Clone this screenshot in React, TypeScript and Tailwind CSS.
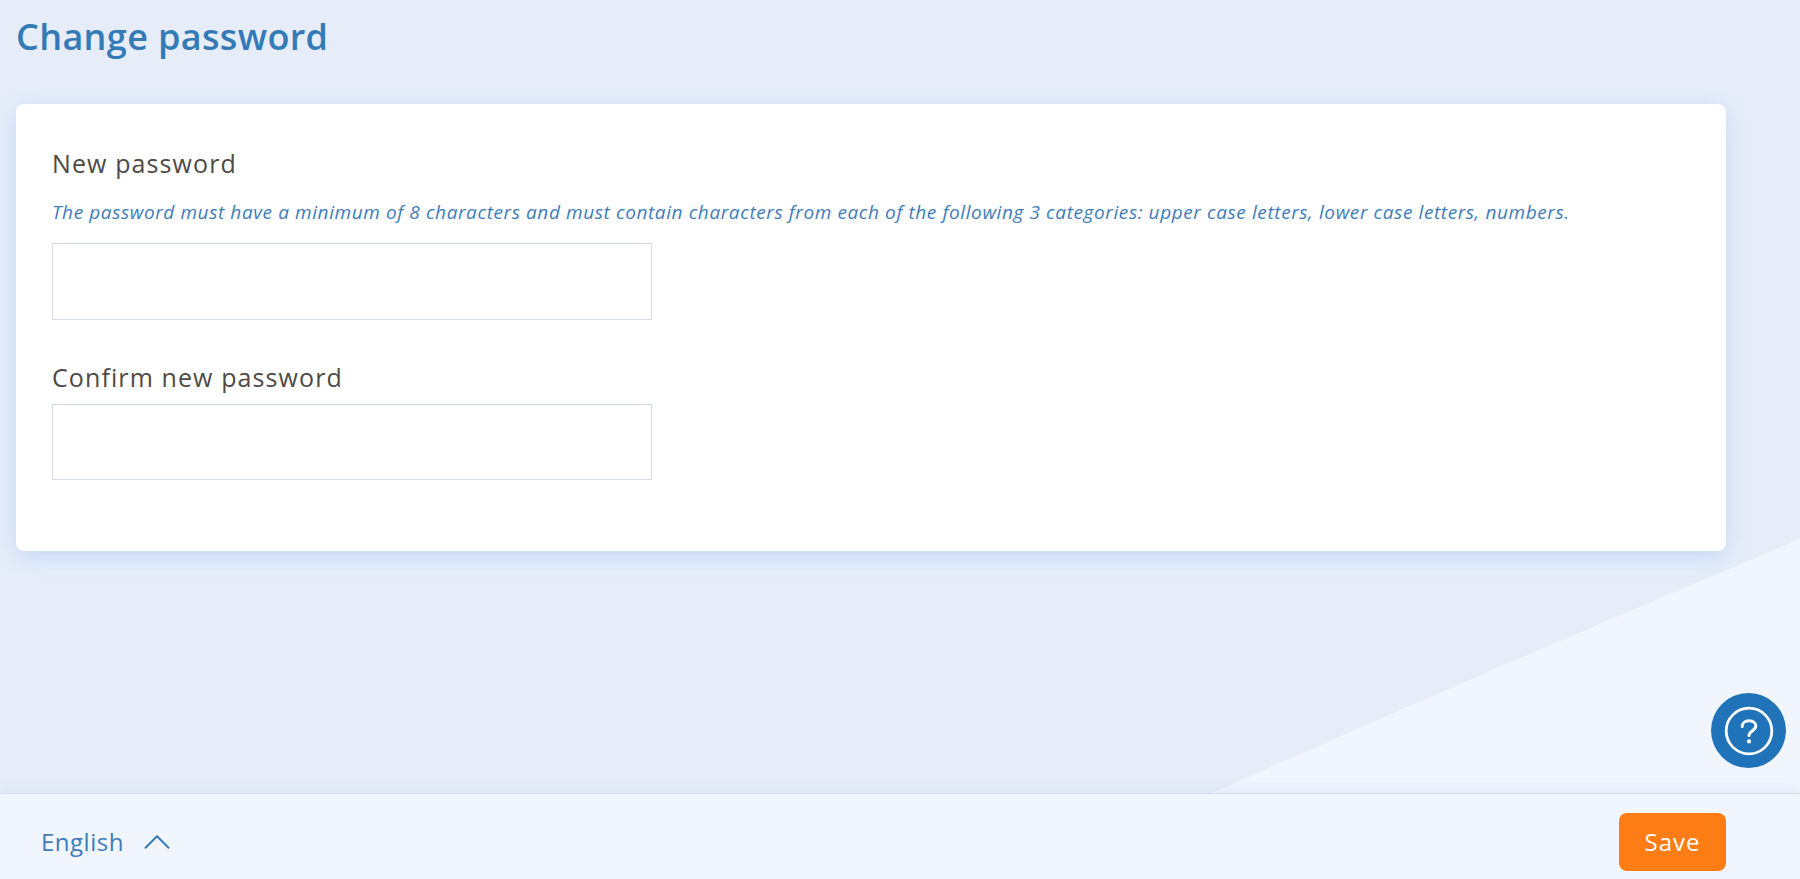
import { ChevronUp } from 'lucide-react';

const font = { fontFamily: '"Open Sans", Lato, sans-serif' };

function HelpButton() {
  return (
    <button className="absolute right-[14px] top-[693px] flex h-[75px] w-[75px] items-center justify-center rounded-full bg-[#2073b8]">
      <svg width="52" height="52" viewBox="0 0 52 52" fill="none" stroke="#fff" strokeWidth="2.8" strokeLinecap="round">
        <circle cx="26" cy="26" r="22.8" />
        <path d="M19.2 21.4c0-3.4 3-5.6 6.8-5.6s6.8 2.2 6.8 5.2c0 4.4-6.8 5-6.8 9.4" strokeWidth="3" />
        <circle cx="26" cy="36.4" r="2.1" fill="#fff" stroke="none" />
      </svg>
    </button>
  );
}

export default function App() {
  return (
    <div style={font} className="relative flex h-screen w-full flex-col overflow-hidden bg-[#e6edf9]">
      {/* fondo diagonal */}
      <svg className="absolute inset-0" width="1800" height="879" viewBox="0 0 1800 879" fill="none">
        <path d="M1800 539Q1500 665 1212 793L1800 793Z" fill="#f0f5fe" />
      </svg>

      <main className="relative flex-1 px-4">
        <h1 className="pt-[14px] text-[36px] leading-[46px] font-semibold tracking-[0.35px] text-[#337ab7]">Change password</h1>

        <form className="mt-[44px] h-[447px] w-[1710px] rounded-lg bg-white px-9 pt-[42px] shadow-[0_6px_22px_rgba(185,208,245,0.75)]">
          <label className="block text-[25px] leading-[34px] font-medium tracking-[1.1px] text-[#4f4a45]">New password</label>
          <p className="mt-[19px] text-[19px] leading-[26px] tracking-[0.6px] italic text-[#3f7cba]">
            The password must have a minimum of 8 characters and must contain characters from each of the following 3 categories: upper case letters, lower case letters, numbers.
          </p>
          <input type="password" className="mt-[18px] block h-[77px] w-[600px] border border-[#d5dce9] bg-white outline-none" />

          <label className="mt-[40px] block text-[25px] leading-[34px] font-medium tracking-[1.1px] text-[#4f4a45]">Confirm new password</label>
          <input type="password" className="mt-[10px] block h-[76px] w-[600px] border border-[#d5dce9] bg-white outline-none" />
        </form>
      </main>

      <HelpButton />

      <footer className="relative flex h-[86px] items-center justify-between border-t border-[#d5dce9] bg-[#f0f5fe] pl-[41px] pr-[74px] pt-[10px] shadow-[0_-4px_12px_rgba(150,170,200,0.12)]">
        <button className="flex items-center gap-[10px] text-[24px] tracking-[0.5px] text-[#3f7cba]">
          English
          <ChevronUp size={46} strokeWidth={1} className="text-[#337ab7]" />
        </button>
        <button type="button" className="h-[58px] w-[107px] rounded-lg bg-[#ff7d14] text-[24px] font-medium tracking-[1px] text-white">
          Save
        </button>
      </footer>
    </div>
  );
}
